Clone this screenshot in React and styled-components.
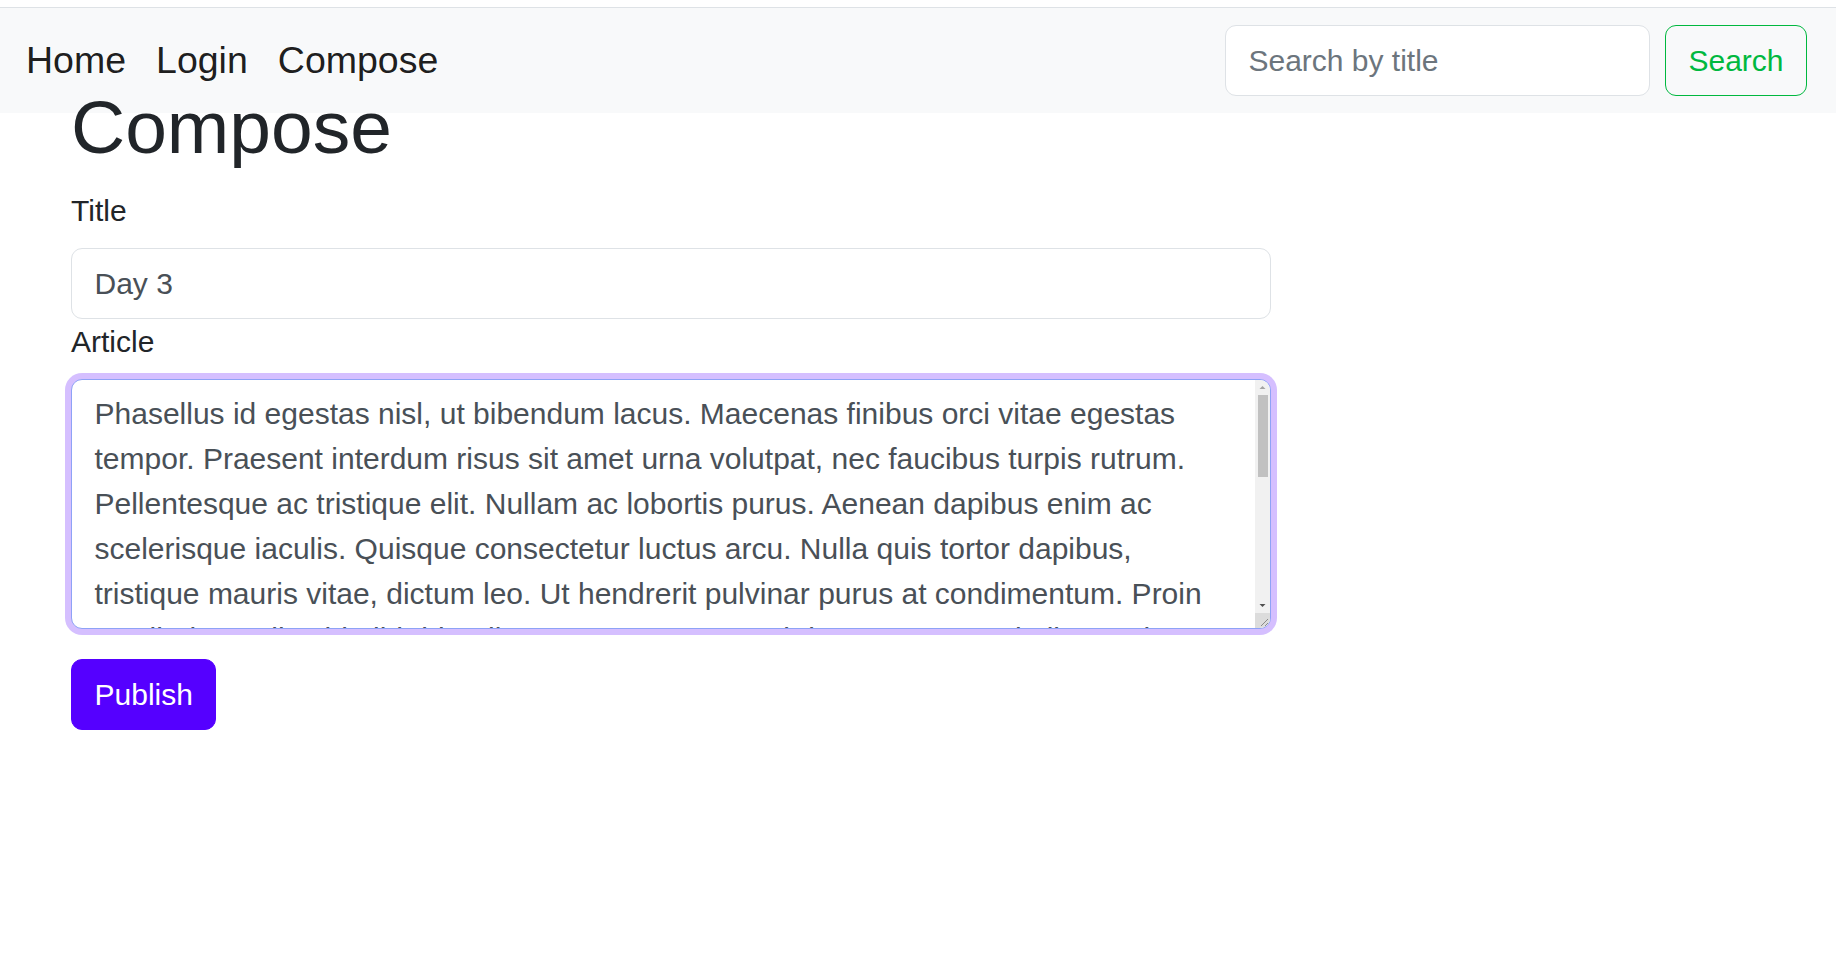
import React from 'react';
import styled, { createGlobalStyle } from 'styled-components';

const articleText =
   "Phasellus id egestas nisl, ut bibendum lacus. Maecenas finibus orci vitae egestas tempor. " +
   "Praesent interdum risus sit amet urna volutpat, nec faucibus turpis rutrum. Pellentesque ac " +
   "tristique elit. Nullam ac lobortis purus. Aenean dapibus enim ac scelerisque iaculis. Quisque " +
   "consectetur luctus arcu. Nulla quis tortor dapibus, tristique mauris vitae, dictum leo. Ut " +
   "hendrerit pulvinar purus at condimentum. Proin vestibulum tellus id nibh blandit, at tempus " +
   "magna ultrices. Donec sed elit eget lorem efficitur vehicula. Integer vitae sapien a augue " +
   "ornare consequat. Curabitur feugiat, lectus ac dignissim fermentum, nisl urna hendrerit " +
   "massa, sed posuere orci justo vitae libero. Vivamus lacinia sem quis velit porttitor, in " +
   "placerat ipsum pellentesque. Morbi sit amet nulla a justo tempor gravida.";

const App = () => {
   return (
      <>
         <GlobalStyle />
         <TopRule />
         <Navbar>
            <NavLinks>
               <NavLink href="#">Home</NavLink>
               <NavLink href="#">Login</NavLink>
               <NavLink href="#">Compose</NavLink>
            </NavLinks>
            <SearchForm onSubmit={(e) => e.preventDefault()}>
               <SearchInput type="search" placeholder="Search by title" />
               <SearchButton type="submit">Search</SearchButton>
            </SearchForm>
         </Navbar>
         <Main>
            <Heading>Compose</Heading>
            <Form onSubmit={(e) => e.preventDefault()}>
               <Label htmlFor="title">Title</Label>
               <Input id="title" type="text" defaultValue="Day 3" />
               <Label htmlFor="article">Article</Label>
               <TextBox>
                  <TextArea id="article" rows={5} defaultValue={articleText} />
                  <ScrollRail>
                     <ScrollArrow>
                        <svg width="15" height="15" viewBox="0 0 15 15">
                           <path d="M4.5 9h6L7.5 6z" fill="#a3a3a3" />
                        </svg>
                     </ScrollArrow>
                     <ScrollTrack>
                        <ScrollThumb />
                     </ScrollTrack>
                     <ScrollArrow>
                        <svg width="15" height="15" viewBox="0 0 15 15">
                           <path d="M4.5 6h6L7.5 9z" fill="#505050" />
                        </svg>
                     </ScrollArrow>
                     <Resizer>
                        <svg width="15" height="15" viewBox="0 0 15 15">
                           <path d="M13 6L6 13M13 10L10 13" stroke="#8a8a8a" strokeWidth="1" />
                        </svg>
                     </Resizer>
                  </ScrollRail>
               </TextBox>
               <PublishButton type="submit">Publish</PublishButton>
            </Form>
         </Main>
      </>
   )
}

const GlobalStyle = createGlobalStyle`
   *, *::before, *::after { box-sizing: border-box; }
   body {
      margin: 0;
      background: #fff;
      color: #212529;
      font-family: "Liberation Sans", Arial, sans-serif;
      font-size: 30px;
      line-height: 1.5;
   }
`

const TopRule = styled.div`
   height: 8px;
   border-bottom: 1px solid #dee2e6;
`

const Navbar = styled.nav`
   display: flex;
   align-items: center;
   justify-content: space-between;
   height: 105px;
   padding: 0 29px 0 26px;
   background: #f8f9fa;
`

const NavLinks = styled.div`
   display: flex;
   align-items: center;
   gap: 30px;
`

const NavLink = styled.a`
   font-size: 37.5px;
   line-height: 1.5;
   color: rgba(0, 0, 0, 0.9);
   text-decoration: none;
`

const SearchForm = styled.form`
   display: flex;
   align-items: center;
   gap: 15px;
`

const SearchInput = styled.input`
   width: 425px;
   height: 71px;
   padding: 0 22.5px;
   font: inherit;
   color: #212529;
   background: #fff;
   border: 1px solid #dee2e6;
   border-radius: 11px;
   outline: none;
   &::placeholder { color: #6c757d; }
   &::-webkit-search-cancel-button { display: none; }
`

const SearchButton = styled.button`
   height: 71px;
   padding: 0 22.5px;
   font: inherit;
   color: #00b83f;
   background: transparent;
   border: 1px solid #00b83f;
   border-radius: 11px;
   cursor: pointer;
`

const Main = styled.main`
   margin-top: -31px;
   padding-left: 71px;
`

const Heading = styled.h1`
   margin: 0 0 16px;
   font-size: 75px;
   font-weight: 500;
   line-height: 1.2;
   color: #212529;
`

const Form = styled.form`
   display: flex;
   flex-direction: column;
   align-items: flex-start;
   width: 1200px;
`

const Label = styled.label`
   display: block;
   margin-bottom: 15px;
   color: #212529;
`

const Input = styled.input`
   width: 100%;
   height: 71px;
   padding: 0 22.5px;
   font: inherit;
   color: #495057;
   background: #fff;
   border: 1px solid #dee2e6;
   border-radius: 11px;
   outline: none;
`

const TextBox = styled.div`
   display: flex;
   width: 100%;
   height: 250px;
   margin-bottom: 30px;
   background: #fff;
   border: 1px solid #8ea2f6;
   border-radius: 11px;
   box-shadow: 0 0 0 6px rgba(88, 0, 255, 0.25);
   overflow: hidden;
`

const TextArea = styled.textarea`
   flex: 1;
   min-width: 0;
   height: 100%;
   padding: 11.25px 22.5px;
   font: inherit;
   line-height: 1.5;
   color: #495057;
   background: transparent;
   border: none;
   outline: none;
   resize: none;
   overflow: hidden;
`

const ScrollRail = styled.div`
   display: flex;
   flex-direction: column;
   width: 15px;
   background: #f1f1f1;
`

const ScrollArrow = styled.div`
   display: flex;
   width: 15px;
   height: 15px;
`

const ScrollTrack = styled.div`
   flex: 1;
   display: flex;
   justify-content: center;
`

const ScrollThumb = styled.div`
   width: 10px;
   height: 82px;
   background: #c1c1c1;
`

const Resizer = styled.div`
   display: flex;
   width: 15px;
   height: 15px;
   background: #dcdcdc;
`

const PublishButton = styled.button`
   height: 71px;
   padding: 0 22.5px;
   font: inherit;
   color: #fff;
   background: #5500ff;
   border: 1px solid #5500ff;
   border-radius: 11px;
   cursor: pointer;
`

export default App
